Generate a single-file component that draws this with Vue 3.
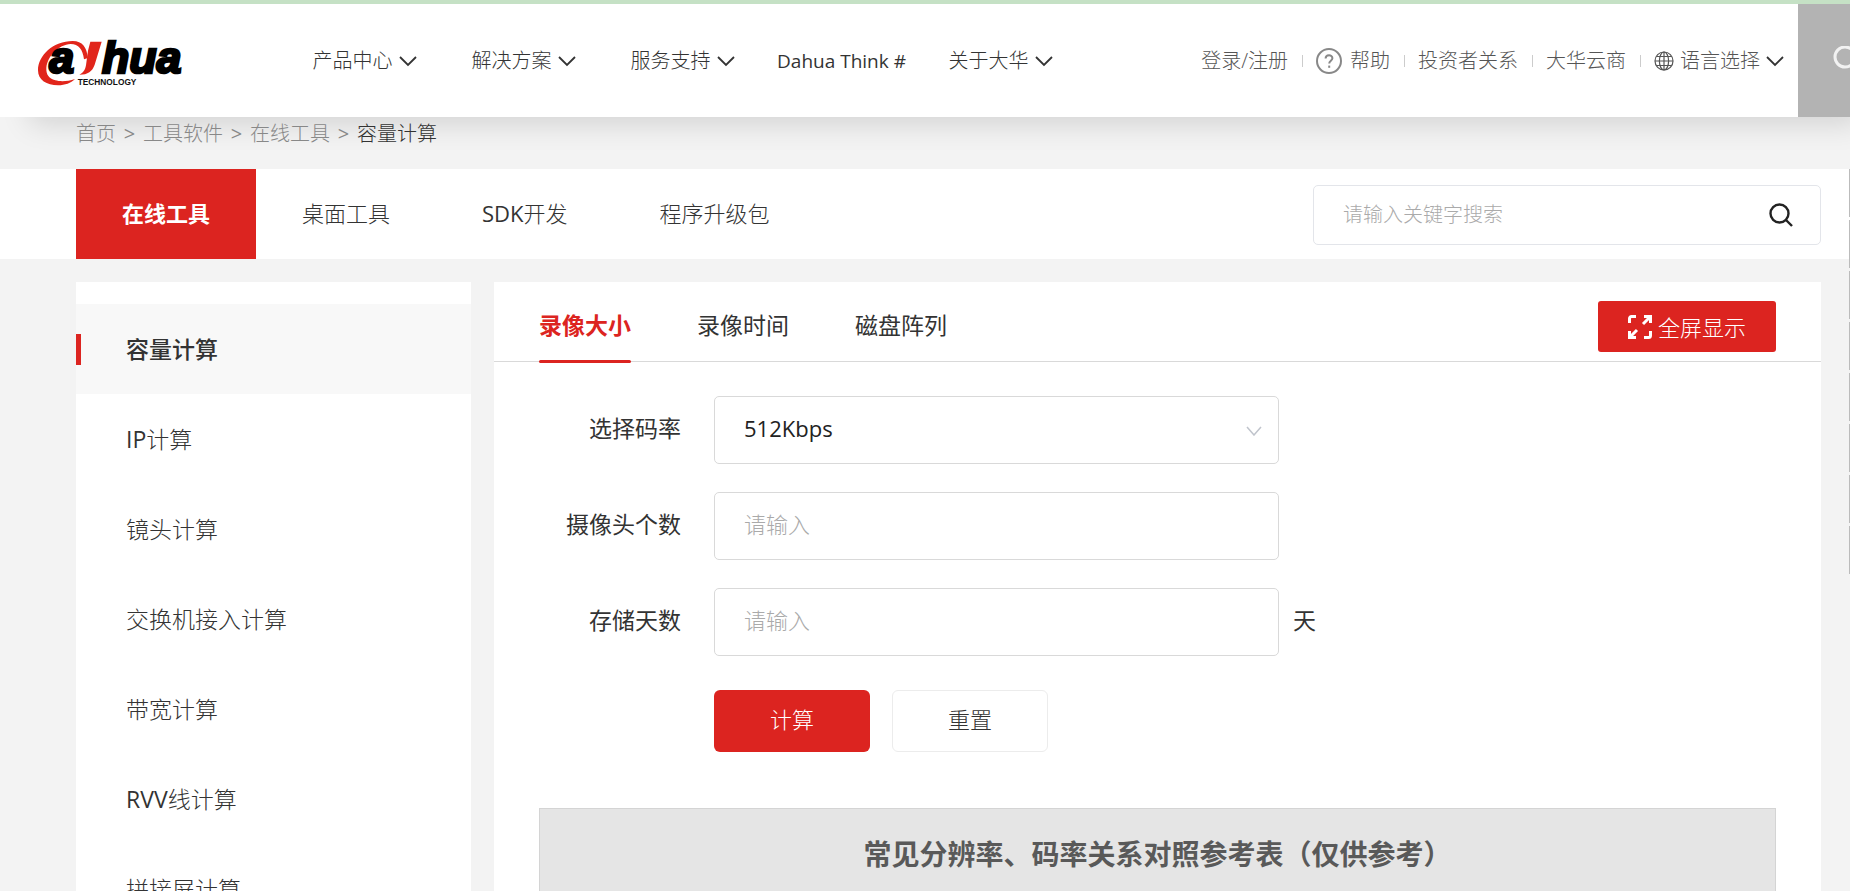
<script setup>
import { ref } from 'vue'

const navItems = [
  { label: '产品中心', menu: true },
  { label: '解决方案', menu: true },
  { label: '服务支持', menu: true },
  { latin: 'Dahua Think #', label: '', menu: false },
  { label: '关于大华', menu: true },
]
const crumbs = ['首页', '工具软件', '在线工具', '容量计算']
const toolTabs = [
  { label: '在线工具' },
  { label: '桌面工具' },
  { latin: 'SDK', label: '开发' },
  { label: '程序升级包' },
]
const sideItems = [
  { label: '容量计算' },
  { latin: 'IP', label: '计算' },
  { label: '镜头计算' },
  { label: '交换机接入计算' },
  { label: '带宽计算' },
  { latin: 'RVV', label: '线计算' },
  { label: '拼接屏计算' },
]
const calcTabs = ['录像大小', '录像时间', '磁盘阵列']

const activeTool = ref(0)
const activeSide = ref(0)
const activeCalc = ref(0)
const keyword = ref('')
const bitrate = ref('512Kbps')
const cameras = ref('')
const days = ref('')

function reset() {
  bitrate.value = '512Kbps'
  cameras.value = ''
  days.value = ''
}
</script>

<template>
  <div class="page">
    <header class="header">
      <a class="logo" href="#" aria-label="Dahua Technology">
        <svg width="180" height="65" viewBox="0 0 540 195">
          <path class="red" d="M204 84C200 52 188 33 158 33C100 33 54 76 54 121C54 150 80 166 114 166C136 165 152 160 165 147C142 155 120 155 106 151C86 145 78 133 79 114C82 78 116 44 152 42C176 42 188 58 192 88Z" />
          <text class="word" x="88" y="130">a</text>
          <path class="red" d="M211 35H245L224 104C217 124 204 134 178 134C192 126 197 117 199 98L204 62Z" />
          <text class="word" x="246" y="130">hua</text>
          <text class="sub" x="173" y="165">TECHNOLOGY</text>
        </svg>
      </a>
      <nav class="nav">
        <a v-for="(item, i) in navItems" :key="i" href="#" class="nav-item">
          <span v-if="item.latin" class="latin">{{ item.latin }}</span>
          <template v-else>{{ item.label }}</template>
          <svg v-if="item.menu" class="chevron" width="18" height="12" viewBox="0 0 18 12"><path d="M1 2l8 8 8-8" /></svg>
        </a>
      </nav>
      <div class="links">
        <a href="#">登录/注册</a>
        <a href="#">
          <svg class="help" width="26" height="26" viewBox="0 0 26 26">
            <circle cx="13" cy="13" r="12" />
            <path d="M9.6 10.6c0-4.4 6.8-4.4 6.8-.3 0 2.3-3.2 2.6-3.2 5.2" />
            <path d="M13.2 17.6v2.2" />
          </svg>
          帮助
        </a>
        <a href="#">投资者关系</a>
        <a href="#">大华云商</a>
        <a href="#" class="lang">
          <svg class="globe" width="20" height="20" viewBox="0 0 20 20">
            <circle cx="10" cy="10" r="9" />
            <ellipse cx="10" cy="10" rx="4.6" ry="9" />
            <path d="M10 1v18M1 10h18M2.4 5.5h15.2M2.4 14.5h15.2" />
          </svg>
          语言选择
          <svg class="chevron" width="18" height="12" viewBox="0 0 18 12"><path d="M1 2l8 8 8-8" /></svg>
        </a>
      </div>
      <button class="search-toggle" type="button" aria-label="搜索">
        <svg width="30" height="30" viewBox="0 0 30 30"><circle cx="13" cy="11" r="10" /><path d="M20 18l8 8" /></svg>
      </button>
    </header>

    <nav class="crumbs">
      <template v-for="(c, i) in crumbs" :key="c">
        <span v-if="i" class="gt">&gt;</span>
        <a href="#" :class="{ current: i === crumbs.length - 1 }">{{ c }}</a>
      </template>
    </nav>

    <div class="toolbar">
      <div class="tool-tabs">
        <button
          v-for="(t, i) in toolTabs"
          :key="t.label"
          type="button"
          class="tool-tab"
          :class="{ active: i === activeTool }"
          @click="activeTool = i"
        ><span v-if="t.latin" class="latin">{{ t.latin }}</span>{{ t.label }}</button>
      </div>
      <div class="search">
        <input v-model="keyword" type="text" placeholder="请输入关键字搜索" aria-label="请输入关键字搜索" />
        <button type="button" aria-label="搜索">
          <svg width="26" height="26" viewBox="0 0 26 26"><circle cx="11.5" cy="11.5" r="9" /><path d="M18 18l6 6" /></svg>
        </button>
      </div>
    </div>

    <div class="content">
      <aside class="side">
        <a
          v-for="(s, i) in sideItems"
          :key="i"
          href="#"
          class="side-item"
          :class="{ active: i === activeSide }"
          @click.prevent="activeSide = i"
        ><span v-if="s.latin" class="latin">{{ s.latin }}</span>{{ s.label }}</a>
      </aside>

      <main class="main">
        <div class="calc-head">
          <button
            v-for="(t, i) in calcTabs"
            :key="t"
            type="button"
            class="calc-tab"
            :class="{ active: i === activeCalc }"
            @click="activeCalc = i"
          >{{ t }}</button>
          <button type="button" class="full">
            <svg width="24" height="24" viewBox="0 0 24 24">
              <path d="M1.5 8V3.5a2 2 0 0 1 2-2H8M22.5 16v4.5a2 2 0 0 1-2 2H16" />
              <path d="M16 1.5h6.5V8M22 2l-7 7M8 22.5H1.5V16M2 22l7-7" />
            </svg>
            全屏显示
          </button>
        </div>

        <form class="form" @submit.prevent>
          <div class="row">
            <label for="bitrate">选择码率</label>
            <div class="field">
              <select id="bitrate" v-model="bitrate">
                <option>512Kbps</option>
                <option>1Mbps</option>
                <option>2Mbps</option>
                <option>4Mbps</option>
              </select>
              <svg class="caret" width="16" height="10" viewBox="0 0 16 10"><path d="M1 1l7 8 7-8" /></svg>
            </div>
          </div>
          <div class="row">
            <label for="cameras">摄像头个数</label>
            <div class="field"><input id="cameras" v-model="cameras" type="text" placeholder="请输入" /></div>
          </div>
          <div class="row">
            <label for="days">存储天数</label>
            <div class="field"><input id="days" v-model="days" type="text" placeholder="请输入" /></div>
            <span class="unit">天</span>
          </div>
          <div class="actions">
            <button type="submit" class="primary">计算</button>
            <button type="button" class="plain" @click="reset">重置</button>
          </div>
        </form>

        <table class="ref-table">
          <thead>
            <tr><th>常见分辨率、码率关系对照参考表（仅供参考）</th></tr>
          </thead>
        </table>
      </main>
    </div>

    <div class="dock"><i v-for="n in 8" :key="n"></i></div>
  </div>
</template>

<style>
html,
body {
  margin: 0;
  background: #f3f3f3;
}
</style>

<style scoped>
* {
  box-sizing: border-box;
}
.page {
  position: relative;
  height: 100vh;
  overflow: hidden;
  border-top: 4px solid #c5e1c5;
  background: #f3f3f3;
  color: #333;
  font-family: "Open Sans", "Noto Sans CJK SC", sans-serif;
  font-size: 23px;
  line-height: 32px;
}
a {
  color: inherit;
  text-decoration: none;
}
button,
input,
select {
  margin: 0;
  font: inherit;
  color: inherit;
}
button {
  padding: 0;
  border: 0;
  background: none;
  cursor: pointer;
  white-space: nowrap;
}
svg {
  display: block;
  flex: none;
  fill: none;
}
.latin {
  font-weight: 400;
}

.header {
  position: relative;
  display: flex;
  align-items: center;
  height: 113px;
  padding-left: 20px;
  background: #fff;
  box-shadow: 20px 16px 28px -10px rgba(0, 0, 0, 0.14);
  font-size: 20px;
  font-weight: 300;
  white-space: nowrap;
}
.logo {
  margin-top: 4px;
  margin-right: 85px;
}
.logo .red {
  fill: #e1251b;
}
.word {
  fill: #000;
  stroke: #000;
  stroke-width: 8px;
  font: italic bold 134px "Liberation Sans", sans-serif;
}
.sub {
  fill: #111;
  font: bold 25px "Liberation Sans", sans-serif;
}
.nav {
  display: flex;
}
.nav-item {
  display: flex;
  justify-content: center;
  align-items: center;
  gap: 6px;
  width: 159px;
}
.nav-item .latin {
  font-size: 19px;
}
.chevron {
  stroke: #333;
  stroke-width: 1.8;
}
.links {
  display: flex;
  margin-left: auto;
  color: #555;
}
.links a {
  position: relative;
  display: flex;
  align-items: center;
  gap: 8px;
  padding: 0 14px;
}
.links a + a::before {
  content: "";
  position: absolute;
  left: 0;
  width: 1px;
  height: 12px;
  background: #ccc;
}
.links .lang {
  gap: 6px;
}
.help {
  stroke: #888;
  stroke-width: 2;
}
.globe {
  stroke: #555;
  stroke-width: 1.2;
}
.search-toggle {
  flex: none;
  width: 52px;
  height: 113px;
  padding-left: 34px;
  overflow: hidden;
  background: #b3b3b3;
}
.search-toggle svg {
  stroke: #f2f2f2;
  stroke-width: 3;
}

.crumbs {
  position: relative;
  display: flex;
  height: 52px;
  padding: 1px 76px 0;
  color: #888;
  font-size: 20px;
  font-weight: 300;
}
.gt {
  width: 27px;
  text-align: center;
  font-weight: 400;
}
.crumbs .current {
  color: #333;
}

.toolbar {
  display: flex;
  align-items: center;
  justify-content: space-between;
  height: 90px;
  padding: 0 29px 0 76px;
  background: #fff;
}
.tool-tabs {
  display: flex;
}
.tool-tab {
  height: 90px;
  padding: 0 46px 2px;
  font-size: 22px;
  font-weight: 300;
}
.tool-tab.active {
  background: #dc2420;
  color: #fff;
  font-weight: 700;
}
.search {
  display: flex;
  align-items: center;
  width: 508px;
  height: 60px;
  margin-top: 2px;
  padding: 0 26px 0 29px;
  border: 1px solid #e3e5ea;
  border-radius: 5px;
  font-size: 20px;
  font-weight: 300;
}
.search input {
  flex: 1;
  min-width: 0;
  padding: 0;
  border: 0;
  outline: 0;
  background: none;
}
input::placeholder {
  color: #aaa;
  opacity: 1;
}
.search svg {
  stroke: #222;
  stroke-width: 2.4;
}

.content {
  display: flex;
  align-items: flex-start;
  gap: 23px;
  padding: 23px 29px 0 76px;
}
.side {
  flex: none;
  width: 395px;
  padding: 22px 0;
  background: #fff;
  font-weight: 300;
}
.side-item {
  position: relative;
  display: flex;
  align-items: center;
  height: 90px;
  padding-left: 50px;
}
.side-item.active {
  background: #f8f8f8;
  font-weight: 500;
}
.side-item.active::before {
  content: "";
  position: absolute;
  left: 0;
  width: 5px;
  height: 31px;
  background: #dc2420;
}

.main {
  flex: 1;
  min-width: 0;
  min-height: 700px;
  background: #fff;
}
.calc-head {
  display: flex;
  align-items: center;
  gap: 66px;
  height: 80px;
  padding: 0 45px;
  border-bottom: 1px solid #d9d9d9;
}
.calc-tab {
  position: relative;
  height: 79px;
  padding-top: 6px;
}
.calc-tab.active {
  color: #dc2420;
  font-weight: 700;
}
.calc-tab.active::after {
  content: "";
  position: absolute;
  left: 0;
  right: 0;
  bottom: -2px;
  height: 3px;
  border-radius: 2px;
  background: #dc2420;
}
.full {
  display: flex;
  align-items: center;
  justify-content: center;
  gap: 6px;
  width: 178px;
  height: 51px;
  margin-top: 10px;
  margin-left: auto;
  border-radius: 3px;
  background: #dc2420;
  color: #fff;
  font-size: 22px;
  font-weight: 300;
}
.full svg {
  stroke: #fff;
  stroke-width: 3;
}

.form {
  display: flex;
  flex-direction: column;
  gap: 28px;
  padding: 34px 45px 56px;
}
.row {
  display: flex;
  align-items: center;
}
.row label {
  width: 142px;
  margin-right: 33px;
  padding-bottom: 4px;
  text-align: right;
}
.field {
  position: relative;
  width: 565px;
}
.field input,
.field select {
  display: block;
  width: 100%;
  height: 68px;
  padding: 0 30px 4px 29px;
  border: 1px solid #d9d9d9;
  border-radius: 5px;
  outline: 0;
  background: #fff;
  appearance: none;
}
.field select {
  color: #222;
  font-size: 22px;
}
.field input {
  font-size: 22px;
  font-weight: 300;
}
.caret {
  position: absolute;
  right: 17px;
  top: 30px;
  stroke: #c0c4cc;
  stroke-width: 1.5;
  pointer-events: none;
}
.unit {
  margin-left: 14px;
  padding-bottom: 4px;
}
.actions {
  display: flex;
  gap: 22px;
  padding: 6px 0 0 175px;
}
.actions button {
  width: 156px;
  height: 62px;
  padding-bottom: 4px;
  border-radius: 6px;
  font-size: 22px;
  font-weight: 300;
}
.primary {
  background: #dc2420;
  color: #fff;
}
.actions .plain {
  border: 1px solid #ececec;
}
.ref-table {
  width: calc(100% - 90px);
  margin: 0 45px;
  border-collapse: collapse;
}
.ref-table th {
  height: 94px;
  padding: 0 0 4px;
  border: 1px solid #d4d4d4;
  background: #e5e5e5;
  color: #595959;
  font-size: 28px;
  font-weight: 700;
  text-align: center;
}

.dock {
  position: absolute;
  top: 165px;
  right: 0;
  display: flex;
  flex-direction: column;
  gap: 3px;
}
.dock i {
  width: 1px;
  height: 48px;
  background: #bbb;
}
</style>
